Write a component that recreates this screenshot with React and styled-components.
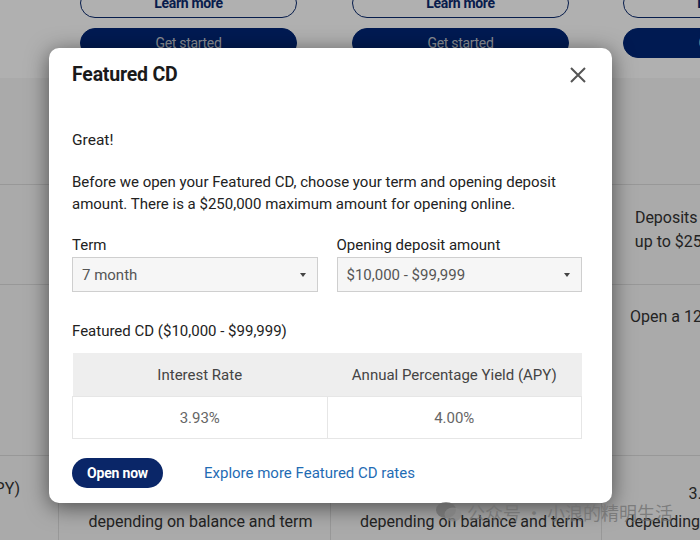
import React from "react";
import styled, { createGlobalStyle } from "styled-components";

const GlobalStyle = createGlobalStyle`
    html, body {
        margin: 0;
        padding: 0;
        width: 700px;
        height: 540px;
        overflow: hidden;
        background: #ffffff;
        font-family: Roboto, "Noto Sans", Arial, sans-serif;
    }
`;

const Viewport = styled.div`
    position: relative;
    width: 700px;
    height: 540px;
    overflow: hidden;
`;

/* page behind the dialog (scrolled a little) */
const Page = styled.div`
    width: 873px;
    margin-top: -12px;
    display: grid;
    grid-template-columns: 58px 272px 271px 272px;
    color: #333;
    font-size: 16px;
`;

const Cell = styled.div`
    background: ${(p) => (p.$top ? "#ffffff" : "#f6f6f6")};
    border-bottom: ${(p) => (p.$top ? "none" : "1px solid #dcdcdc")};
    border-left: ${(p) => (p.$split ? "1px solid #dcdcdc" : "none")};
    height: ${(p) => p.$h}px;
    box-sizing: border-box;
    padding: ${(p) => p.$pad || "0"};
    text-align: center;
    line-height: 24px;
    overflow: hidden;
`;

const LabelCell = styled(Cell)`
    text-align: right;
    white-space: nowrap;
    padding-right: 38px;
    direction: rtl;
`;

const ButtonStack = styled.div`
    display: flex;
    flex-direction: column;
    gap: 10px;
    width: 217px;
    margin-left: 22px;
`;

const OutlineButton = styled.div`
    height: 30px;
    box-sizing: border-box;
    border: 1px solid #0b2a6e;
    border-radius: 15px;
    display: flex;
    align-items: center;
    justify-content: center;
    color: #0b2a6e;
    font-weight: 700;
    font-size: 14px;
    letter-spacing: -0.3px;
`;

const SolidButton = styled(OutlineButton)`
    background: #002677;
    border-color: #002677;
    color: #c9cdd6;
    font-weight: 400;
`;

const CellLine = styled.div`
    white-space: nowrap;
    line-height: ${(p) => p.$lh || 24}px;
`;

const Overlay = styled.div`
    position: absolute;
    inset: 0;
    background: rgba(0, 0, 0, 0.31);
`;

const Modal = styled.div`
    position: absolute;
    top: 48px;
    left: 49px;
    width: 563px;
    background: #fff;
    border-radius: 10px;
    box-shadow: 0 4px 22px rgba(0, 0, 0, 0.55);
    color: #222;
`;

const Header = styled.div`
    display: flex;
    align-items: center;
    justify-content: space-between;
    padding: 15px 25px 15px 23px;
`;

const Title = styled.h2`
    margin: 0;
    font-size: 19.5px;
    line-height: 24px;
    font-weight: 700;
    color: #1a1a1a;
    letter-spacing: -0.2px;
`;

const CloseButton = styled.button`
    border: none;
    background: none;
    padding: 0;
    width: 18px;
    height: 18px;
    display: flex;
    cursor: pointer;
`;

const Body = styled.div`
    padding: 0 30px 15px 23px;
`;

const Lead = styled.p`
    margin: 27px 0 0;
    font-size: 15.5px;
    line-height: 22px;
`;

const Text = styled.p`
    margin: 20px 0 0;
    font-size: 15px;
    line-height: 22px;
`;

const Fields = styled.div`
    display: grid;
    grid-template-columns: 1fr 1fr;
    gap: 19px;
    margin-top: 20px;
`;

const Field = styled.label`
    display: flex;
    flex-direction: column;
    gap: 2px;
    font-size: 15px;
    line-height: 20px;
    color: #222;
`;

const Select = styled.div`
    height: 35px;
    box-sizing: border-box;
    border: 1px solid #cfcfcf;
    background: #f6f6f6;
    display: flex;
    align-items: center;
    justify-content: space-between;
    padding: 0 11px 0 9px;
    color: #555;
    font-size: 15px;
`;

const Caret = styled.span`
    width: 0;
    height: 0;
    border-left: 3px solid transparent;
    border-right: 3px solid transparent;
    border-top: 4px solid #444;
`;

const Caption = styled.div`
    margin-top: 29px;
    font-size: 15px;
    line-height: 20px;
`;

const Table = styled.table`
    width: 100%;
    margin-top: 12px;
    border-collapse: collapse;
    table-layout: fixed;
    font-size: 15px;
`;

const Th = styled.th`
    background: #eeeeee;
    height: 43px;
    font-weight: 400;
    color: #444;
    padding: 0;
`;

const Td = styled.td`
    height: 41px;
    text-align: center;
    color: #666;
    border: 1px solid #e6e6e6;
    padding: 0;
`;

const Actions = styled.div`
    display: flex;
    align-items: center;
    gap: 41px;
    margin-top: 19px;
`;

const OpenButton = styled.button`
    height: 30px;
    width: 91px;
    border: none;
    border-radius: 15px;
    background: #0a2668;
    color: #fff;
    font-family: Roboto, Arial, sans-serif;
    font-weight: 700;
    font-size: 14px;
    letter-spacing: -0.2px;
    padding: 0;
`;

const Link = styled.a`
    color: #1f6cb4;
    font-size: 15px;
    text-decoration: none;
`;

const Watermark = styled.div`
    position: absolute;
    left: 435px;
    top: 500px;
    display: flex;
    align-items: center;
    gap: 4px;
    color: rgba(110, 110, 110, 0.75);
    font-family: "Noto Sans CJK SC", "Noto Sans", sans-serif;
    font-size: 18px;
    line-height: 24px;
    white-space: nowrap;
`;

const CloseIcon = () => (
    <svg width="18" height="18" viewBox="0 0 18 18">
        <path d="M2 2 L16 16 M16 2 L2 16" stroke="#555" strokeWidth="2" fill="none" />
    </svg>
);

const WeChatIcon = () => (
    <svg width="28" height="22" viewBox="0 0 28 22">
        <ellipse cx="11" cy="9" rx="10" ry="8" fill="rgba(100,100,100,0.7)" />
        <ellipse cx="18" cy="13.5" rx="8.5" ry="7" fill="rgba(135,135,135,0.75)" />
    </svg>
);

const Background = () => (
    <Page>
        <Cell $top $h={90} />
        <Cell $top $h={90}>
            <ButtonStack>
                <OutlineButton>Learn more</OutlineButton>
                <SolidButton>Get started</SolidButton>
            </ButtonStack>
        </Cell>
        <Cell $top $h={90}>
            <ButtonStack>
                <OutlineButton>Learn more</OutlineButton>
                <SolidButton>Get started</SolidButton>
            </ButtonStack>
        </Cell>
        <Cell $top $h={90}>
            <ButtonStack>
                <OutlineButton>Learn more</OutlineButton>
                <SolidButton>Get started</SolidButton>
            </ButtonStack>
        </Cell>

        <LabelCell $h={107} />
        <Cell $h={107} />
        <Cell $h={107} />
        <Cell $h={107} />

        <LabelCell $h={100} $pad="21px 0 0" />
        <Cell $h={100} $pad="21px 10px 0">
            <CellLine>Deposits are insured by FDIC</CellLine>
            <CellLine>up to $250,000 per depositor</CellLine>
        </Cell>
        <Cell $h={100} $pad="21px 10px 0">
            <CellLine>Deposits are insured by FDIC</CellLine>
            <CellLine>up to $250,000 per depositor</CellLine>
        </Cell>
        <Cell $h={100} $pad="21px 10px 0">
            <CellLine>Deposits are FDIC insured by</CellLine>
            <CellLine>up to $250,000 per depositor</CellLine>
        </Cell>

        <LabelCell $h={171} />
        <Cell $h={171} $pad="20px 10px 0">
            <CellLine>Open a 12-month Featured CD</CellLine>
        </Cell>
        <Cell $h={171} $pad="20px 10px 0">
            <CellLine>Open a 12-month Featured CD</CellLine>
        </Cell>
        <Cell $h={171} $pad="20px 10px 0">
            <CellLine>Open a 12-month Featured CD</CellLine>
        </Cell>

        <LabelCell $h={120} $pad="21px 38px 0 0">
            Annual Percentage Yield (APY)
        </LabelCell>
        <Cell $split $h={120} $pad="22px 0 0 12px">
            <CellLine $lh={32}>3.75% - 4.00%</CellLine>
            <CellLine>depending on balance and term</CellLine>
        </Cell>
        <Cell $split $h={120} $pad="22px 0 0 12px">
            <CellLine $lh={32}>3.75% - 4.00%</CellLine>
            <CellLine>depending on balance and term</CellLine>
        </Cell>
        <Cell $split $h={120} $pad="22px 10px 0">
            <CellLine $lh={32}>3.75% - 4.00%</CellLine>
            <CellLine>depending on balance and term</CellLine>
        </Cell>
    </Page>
);

const App = () => {
    return (
        <Viewport>
            <GlobalStyle />
            <Background />
            <Overlay />
            <Modal role="dialog">
                <Header>
                    <Title>Featured CD</Title>
                    <CloseButton aria-label="Close">
                        <CloseIcon />
                    </CloseButton>
                </Header>
                <Body>
                    <Lead>Great!</Lead>
                    <Text>
                        Before we open your Featured CD, choose your term and opening deposit
                        amount. There is a $250,000 maximum amount for opening online.
                    </Text>
                    <Fields>
                        <Field>
                            Term
                            <Select>
                                7 month
                                <Caret />
                            </Select>
                        </Field>
                        <Field>
                            Opening deposit amount
                            <Select>
                                $10,000 - $99,999
                                <Caret />
                            </Select>
                        </Field>
                    </Fields>
                    <Caption>Featured CD ($10,000 - $99,999)</Caption>
                    <Table>
                        <thead>
                            <tr>
                                <Th>Interest Rate</Th>
                                <Th>Annual Percentage Yield (APY)</Th>
                            </tr>
                        </thead>
                        <tbody>
                            <tr>
                                <Td>3.93%</Td>
                                <Td>4.00%</Td>
                            </tr>
                        </tbody>
                    </Table>
                    <Actions>
                        <OpenButton>Open now</OpenButton>
                        <Link href="#">Explore more Featured CD rates</Link>
                    </Actions>
                </Body>
            </Modal>
            <Watermark>
                <WeChatIcon />
                公众号 · 小浪的精明生活
            </Watermark>
        </Viewport>
    );
};

export default App;
